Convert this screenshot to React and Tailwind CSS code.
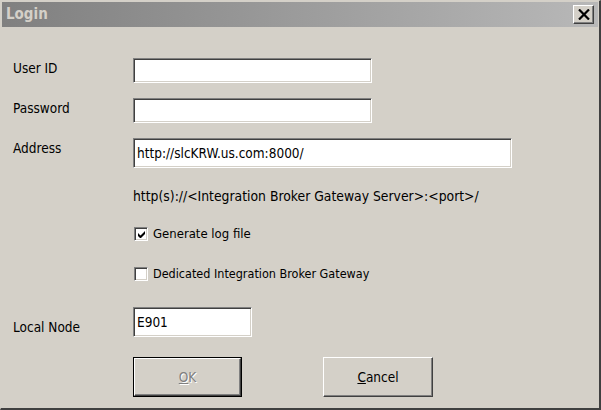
import React from "react";

const font = { fontFamily: "'DejaVu Sans Condensed', 'DejaVu Sans', 'Liberation Sans', sans-serif" };

const Field = ({ width, height, value }) => (
  <div
    className={`${width} ${height} bg-white border border-t-[#808080] border-l-[#808080] border-b-white border-r-white shadow-[inset_1px_1px_0_#404040,inset_-1px_-1px_0_#d4d0c8] flex items-center px-[3px] text-[13.5px] text-black`}
  >
    {value}
  </div>
);

const Checkbox = ({ checked }) => (
  <div className="w-[14px] h-[14px] bg-white border border-t-[#808080] border-l-[#808080] border-b-white border-r-white shadow-[inset_1px_1px_0_#404040,inset_-1px_-1px_0_#d4d0c8] flex items-center justify-center">
    {checked && (
      <svg width="7" height="7" viewBox="0 0 7 7">
        <path d="M0 2v3l2 2h1l4-4V0L2.5 4.5z" fill="#000" />
      </svg>
    )}
  </div>
);

export default function App() {
  return (
    <div
      className="w-[601px] h-[410px] bg-[#d4d0c8] border-t border-l border-t-[#d4d0c8] border-l-[#d4d0c8] border-r-2 border-b-2 border-r-[#404040] border-b-[#404040] flex flex-col text-[13.5px] text-black select-none"
      style={font}
    >
      {/* Title bar */}
      <div className="mx-[1px] mt-[1px] h-[25px] bg-gradient-to-r from-[#808080] to-[#b8b8b8] flex items-center justify-between pl-[4px] pr-[4px]">
        <span className="font-bold text-[15px] text-[#d4d0c8]">Login</span>
        <div className="w-[21px] h-[19px] bg-[#d4d0c8] border border-t-white border-l-white border-r-[#404040] border-b-[#404040] shadow-[inset_-1px_-1px_0_#808080] flex items-center justify-center">
          <svg width="12" height="11" viewBox="0 0 12 11">
            <path d="M1 0.5L11 10.5M11 0.5L1 10.5" stroke="#000" strokeWidth="2.2" />
          </svg>
        </div>
      </div>

      <div className="flex flex-col pl-[12px] pt-[31px]">
        {/* User ID */}
        <div className="flex h-[25px]">
          <span className="w-[120px]">User ID</span>
          <Field width="w-[239px]" height="h-[25px]" />
        </div>

        {/* Password */}
        <div className="flex h-[25px] mt-[15px]">
          <span className="w-[120px]">Password</span>
          <Field width="w-[239px]" height="h-[25px]" />
        </div>

        {/* Address */}
        <div className="flex h-[30px] mt-[15px]">
          <span className="w-[120px]">Address</span>
          <Field width="w-[379px]" height="h-[30px]" value="http://slcKRW.us.com:8000/" />
        </div>

        <div className="pl-[120px] mt-[19px] h-[18px] leading-[18px] text-[13.8px]">
          http(s)://&lt;Integration Broker Gateway Server&gt;:&lt;port&gt;/
        </div>

        <div className="pl-[121px] mt-[21px] flex items-center gap-[5px] h-[16px]">
          <Checkbox checked />
          <span className="text-[13px]">Generate log file</span>
        </div>

        <div className="pl-[121px] mt-[24px] flex items-center gap-[5px] h-[16px]">
          <Checkbox />
          <span className="text-[12.5px]">Dedicated Integration Broker Gateway</span>
        </div>

        {/* Local Node */}
        <div className="flex h-[30px] mt-[25px]">
          <span className="w-[120px] pt-[10px]">Local Node</span>
          <Field width="w-[119px]" height="h-[30px]" value="E901" />
        </div>

        {/* Buttons */}
        <div className="flex mt-[20px] pl-[120px] gap-[81px]">
          <div className="w-[109px] h-[40px] border border-black flex">
            <div className="flex-1 border border-t-white border-l-white border-r-[#404040] border-b-[#404040] shadow-[inset_-1px_-1px_0_#808080] flex items-center justify-center text-[#808080] [text-shadow:1px_1px_0_#fff]">
              <span>
                <span className="underline">O</span>K
              </span>
            </div>
          </div>
          <div className="w-[110px] h-[40px] border border-t-white border-l-white border-r-[#404040] border-b-[#404040] shadow-[inset_-1px_-1px_0_#808080] flex items-center justify-center">
            <span>
              <span className="underline">C</span>ancel
            </span>
          </div>
        </div>
      </div>
    </div>
  );
}
